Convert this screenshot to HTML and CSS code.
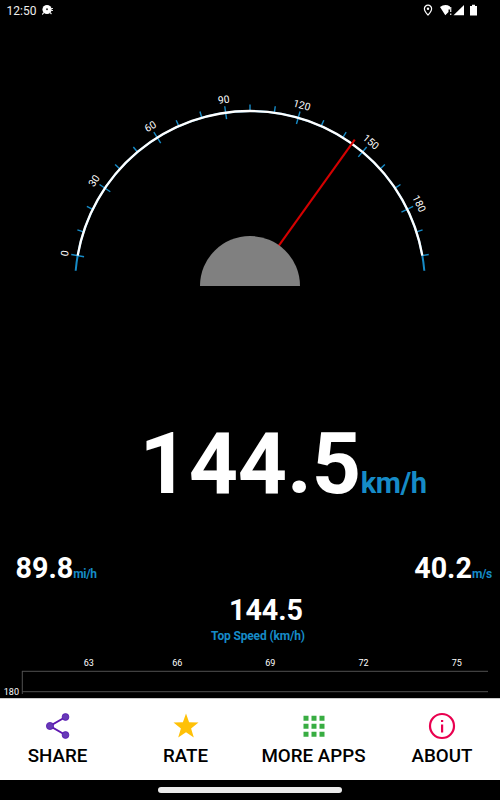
FILE: index.html
```
<!DOCTYPE html>
<html lang="en">
<head>
<meta charset="utf-8">
<title>Speedometer</title>
<link rel="stylesheet" href="styles.css">
</head>
<body>
<div class="app">
  <header class="status">
    <span class="clock">12:50</span>
    <svg class="status-left" viewBox="0 0 14 12"><circle cx="5" cy="5.500" r="4.600" fill="#fff"/><circle cx="5" cy="5.300" r="1" fill="#333"/><path d="M0 10.500l2-2M7.500 8l2 2M8.500 4.500h2.500M8.500 6.500h2.500" stroke="#ddd" stroke-width="1.200"/></svg>
    <svg class="status-right" viewBox="0 0 60 14">
      <path d="M8 1.200a3.600 3.600 0 0 0-3.600 3.600C4.400 7.400 8 11 8 11s3.600-3.600 3.600-6.200A3.600 3.600 0 0 0 8 1.200z" fill="none" stroke="#fff" stroke-width="1.200"/><circle cx="8" cy="4.800" r="1.200" fill="#fff"/>
      <path d="M20 3Q25 -.5 30 2.500V5.500h-1.500v2.500l-3.200 3.200z" fill="#fff"/><path d="M30.700 3v5M30.700 9.500v1.500" stroke="#ddd" stroke-width="1.300"/>
      <path d="M33.500 11.200L44 1v10.200z" fill="#fff"/><path d="M50 2h2V.8h3V2h2v9.500h-7z" fill="#fff"/>
    </svg>
  </header>
  <svg class="gauge" viewBox="0 0 500 266">
    <g transform="translate(250 266)">
      <path class="arc-end" d="M-174.330 -15.250A175 175 0 0 1 174.330 -15.250"/>
      <g id="ticks"></g>
      <path class="arc" d="M-172.340 -30.390A175 175 0 0 1 172.340 -30.390"/>
      <g id="labels"></g>
      <path class="needle" d="M0 -48V-180" transform="rotate(35.600)"/>
      <path class="hub" d="M-50 0A50 50 0 0 1 50 0z"/>
    </g>
  </svg>
  <section class="speed"><span class="speed-value">144.5</span><span class="speed-unit">km/h</span></section>
  <section class="conversions">
    <div class="conv"><span class="value">89.8</span><span class="unit">mi/h</span></div>
    <div class="conv"><span class="value">40.2</span><span class="unit">m/s</span></div>
  </section>
  <section class="top"><div class="value">144.5</div><div class="top-label">Top Speed (km/h)</div></section>
  <svg class="chart" viewBox="0 0 500 48">
    <g class="axis"><text x="88.700" y="16">63</text><text x="177.200" y="16">66</text><text x="270.300" y="16">69</text><text x="363.500" y="16">72</text><text x="456.700" y="16">75</text><text x="11.400" y="44.500">180</text></g>
    <path class="grid" d="M22 21.300H488M22 41.700H488M22.300 21V44"/>
  </svg>
  <nav class="menu">
    <div class="item share"><svg viewBox="0 0 28 28"><path d="M21.500 5L6 14l15.500 9" fill="none" stroke="#5e17b0" stroke-width="2"/><g fill="#673ab7" stroke="#5516b2" stroke-width=".8"><circle cx="21.500" cy="5" r="3.400"/><circle cx="6" cy="14" r="3.600"/><circle cx="21.500" cy="23" r="3.400"/></g></svg><span>SHARE</span></div>
    <div class="item rate"><svg viewBox="0 0 28 28"><path d="M14 1.500l3.100 8.800 9.400.300-7.400 5.800 2.700 9.200-7.800-5.400-7.800 5.400 2.700-9.200-7.400-5.800 9.400-.300z" fill="#ffc107"/></svg><span>RATE</span></div>
    <div class="item more"><svg viewBox="0 0 28 28"><path d="M3.500 3.700h5v5h-5zM11.500 3.700h5v5h-5zM19.500 3.700h5v5h-5zM3.500 11.700h5v5h-5zM11.500 11.700h5v5h-5zM19.500 11.700h5v5h-5zM3.500 19.700h5v5h-5zM11.500 19.700h5v5h-5zM19.500 19.700h5v5h-5z" fill="#38ad42"/></svg><span>MORE APPS</span></div>
    <div class="item about"><svg viewBox="0 0 28 28"><circle cx="14" cy="14" r="12" fill="none" stroke="#e9004f" stroke-width="2.200"/><path d="M13 8h2.200v2H13zM13 12.500h2.200v8H13z" fill="#e9004f"/></svg><span>ABOUT</span></div>
  </nav>
  <footer class="home"><div class="handle"></div></footer>
</div>
<script src="gauge.js"></script>
</body>
</html>
```
FILE: styles.css
```
* { box-sizing: border-box; }
body { margin: 0; background: #000; color: #fff; font-family: Roboto, "Liberation Sans", sans-serif; }
.app { width: 500px; height: 800px; display: flex; flex-direction: column; overflow: hidden; }
.app > * { flex: none; }
svg { display: block; }
.status { height: 20px; display: flex; align-items: center; padding: 0 20px 0 6.5px; }
.clock { font-size: 12px; line-height: 20px; padding-top: 1px; width: 35.5px; color: #eee; }
.status-left { width: 14px; height: 12px; }
.status-right { width: 60px; height: 14px; margin: 2px 0 0 auto; }
.gauge { width: 500px; height: 266px; }
.arc, .arc-end { fill: none; stroke: #fff; stroke-width: 2.3; }
.arc-end { stroke: #168bc7; stroke-width: 2; }
.tick { stroke: #168bc7; stroke-width: 1.4; }
.tick-label { fill: #fff; font-size: 10.3px; text-anchor: middle; }
.needle { stroke: #d40000; stroke-width: 2.1; }
.hub { fill: #808080; }
.speed { height: 264px; display: flex; align-items: baseline; padding: 127px 0 0 139.5px; font-weight: 700; white-space: nowrap; line-height: 102px; }
.speed-value { font-size: 86px; letter-spacing: -0.2px; }
.speed-unit { font-size: 29px; letter-spacing: -0.5px; color: #168bc7; }
.conversions { height: 44px; display: flex; justify-content: space-between; align-items: baseline; padding: 1px 8px 0 15.5px; font-weight: 700; }
.conv { display: flex; align-items: baseline; }
.value { font-size: 28.7px; line-height: 34px; font-weight: 700; }
.unit { font-size: 12px; letter-spacing: -0.3px; color: #168bc7; }
.top { height: 56px; text-align: center; }
.top .value { padding-left: 32px; height: 33px; line-height: 32px; }
.top-label { font-size: 12px; letter-spacing: -0.15px; line-height: 18px; font-weight: 700; color: #168bc7; padding-left: 16px; }
.chart { width: 500px; height: 48px; }
.axis text { fill: #fff; font-size: 9px; text-anchor: middle; }
.grid { fill: none; stroke: #505050; stroke-width: 1; }
.menu { height: 82px; display: flex; background: #fff; border-top: 1px solid #ccc; color: #000; }
.item { display: flex; flex-direction: column; align-items: center; padding-top: 13px; font-size: 18.75px; line-height: 22px; font-weight: 500; white-space: nowrap; }
.item svg { width: 28px; height: 28px; margin-bottom: 5px; }
.share { width: 115px; }
.rate { width: 141px; }
.more { width: 115px; }
.about { width: 142px; margin-right: -13px; }
.home { height: 20px; display: flex; align-items: center; justify-content: center; }
.handle { width: 184px; height: 6px; border-radius: 3px; background: #ebebeb; }
```
FILE: gauge.js
```
const ns = 'http://www.w3.org/2000/svg';
const ticks = document.getElementById('ticks');
const labels = document.getElementById('labels');
for (let speed = 0; speed <= 200; speed += 10) {
  const angle = speed * 0.8 - 80;
  const major = speed % 30 === 0;
  const line = document.createElementNS(ns, 'line');
  line.setAttribute('class', 'tick');
  line.setAttribute('y1', major ? -168.5 : -175);
  line.setAttribute('y2', -181.5);
  line.setAttribute('transform', `rotate(${angle})`);
  ticks.appendChild(line);
  if (major) {
    const text = document.createElementNS(ns, 'text');
    text.setAttribute('class', 'tick-label');
    text.setAttribute('y', -184.6);
    text.setAttribute('transform', `rotate(${angle})`);
    text.textContent = speed;
    labels.appendChild(text);
  }
}
```
